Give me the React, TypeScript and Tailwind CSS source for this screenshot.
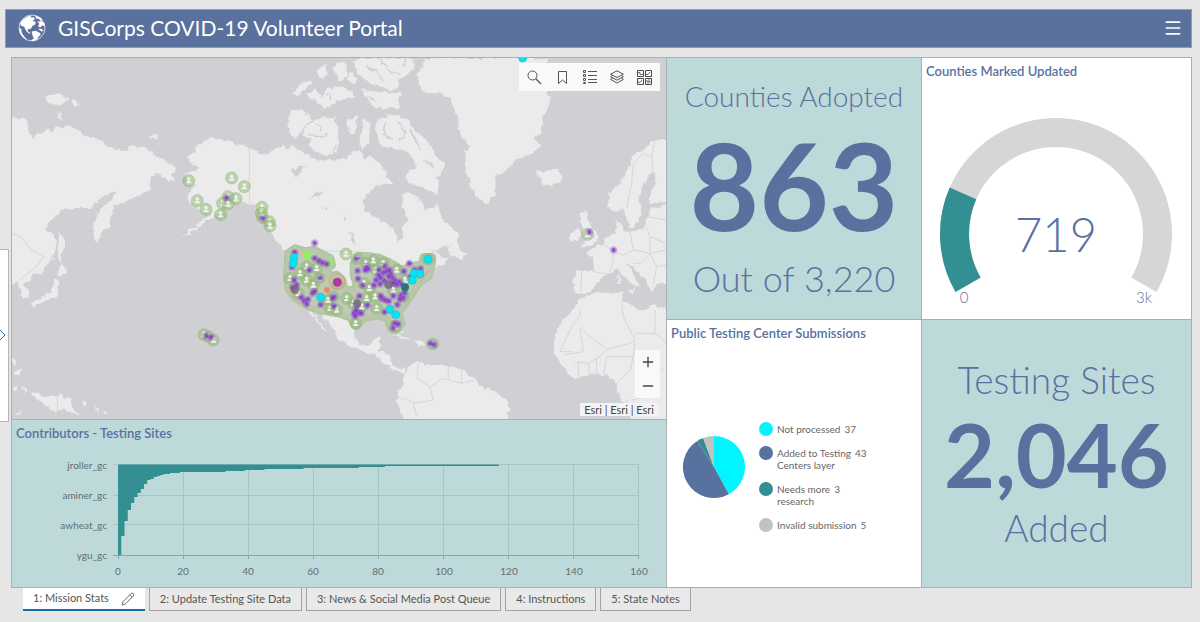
import { useState } from "react";
import { Plus, Minus, Pencil, Menu } from "lucide-react";

const TABS = [
  "1: Mission Stats",
  "2: Update Testing Site Data",
  "3: News & Social Media Post Queue",
  "4: Instructions",
  "5: State Notes",
];

const SUBMISSIONS = [
  { label: ["Not processed"], count: 37, color: "#00f5ff" },
  { label: ["Added to Testing", "Centers layer"], count: 43, color: "#58719f" },
  { label: ["Needs more", "research"], count: 3, color: "#338f92" },
  { label: ["Invalid submission"], count: 5, color: "#c2c2c2" },
];

// [submissions, lower edge of the last bar with that length]
const BAR_STEPS = [
  [117, 466], [82, 467], [74, 468], [57, 469], [45, 470], [39, 471], [33, 472], [19, 473],
  [16, 474], [14, 475], [13, 476], [12, 477], [11, 479], [10, 480], [9, 484], [8, 489],
  [7, 493], [6, 497], [5, 503], [4, 510], [3, 521], [2, 536], [1, 555],
];

const LAND = [
  // eastern asia
  "M30 200L60 206L78 208L85 222L88 245L100 267L108 255L130 247L140 236L158 250L165 230L185 228L210 230L232 238L245 255L270 262L300 268L315 290L345 296L372 302L385 305L392 290L420 290L445 296L470 315L500 335L530 355L528 372L510 372L522 385L505 392L485 378L475 370L460 378L448 402L455 422L435 425L400 445L365 462L345 462L335 490L328 520L308 550L290 578L282 550L280 520L290 490L320 462L345 430L338 425L310 440L290 455L265 474L215 475L185 480L165 500L145 525L132 540L160 548L170 575L168 600L150 635L125 665L100 675L88 690L72 700L85 720L86 745L68 750L62 720L50 700L30 705Z",
  "M178 545L186 552L192 595L184 610L182 640L174 620L175 590Z",
  "M178 645L190 655L202 662L185 680L172 672Z",
  "M168 680L178 700L170 740L140 750L118 762L98 775L92 762L120 745L150 730L160 705Z",
  "M135 145L150 132L185 130L202 150L180 168L155 165Z",
  "M212 152L232 150L242 166L225 168Z",
  "M168 188L188 203L180 208Z",
  "M448 262L458 254L478 256L474 265Z",
  "M95 1028L120 1028L130 1043L160 1036L180 1033L212 1052L218 1072L240 1096L210 1090L190 1078L170 1085L150 1075L130 1060L105 1045Z",
  "M240 1062L262 1055L255 1068Z",
  "M38 925L52 930L48 945L40 945Z",
  "M48 955L66 960L58 976L46 970Z",
  "M40 1015L52 1012L50 1024L42 1026ZM66 1014L82 1018L78 1028ZM42 1090L66 1080L60 1092ZM282 1068L296 1076L290 1080ZM305 1080L318 1092L310 1092Z",
  // north america
  "M560 320L575 312L590 290L615 272L632 260L650 268L690 275L720 285L748 294L780 308L800 312L820 300L838 290L850 280L858 295L885 290L905 305L940 325L975 332L1010 328L1040 325L1060 305L1080 300L1090 330L1115 320L1140 340L1160 370L1150 400L1110 420L1090 450L1095 485L1120 500L1160 520L1185 540L1195 575L1205 560L1205 532L1222 510L1210 470L1208 430L1230 425L1255 440L1275 482L1300 472L1315 460L1320 490L1340 520L1375 555L1370 575L1335 590L1290 604L1310 602L1320 618L1342 625L1335 640L1310 655L1295 650L1280 680L1255 700L1235 730L1225 755L1195 780L1205 810L1206 845L1190 850L1175 820L1160 802L1120 805L1085 810L1068 830L1065 860L1080 885L1100 890L1115 870L1142 860L1140 880L1130 905L1170 912L1175 945L1200 958L1218 955L1212 970L1190 965L1155 945L1130 918L1100 905L1050 890L1030 872L1015 870L1000 835L965 790L948 784L936 782L950 805L980 845L970 840L940 800L920 775L890 750L868 715L855 690L855 640L862 604L840 590L820 560L800 520L780 480L755 462L735 460L705 460L680 470L655 490L630 508L600 526L570 548L540 562L590 524L625 500L640 485L610 490L570 460L565 430L590 405L560 400L555 375L600 355L575 340Z",
  "M1345 590L1370 572L1380 600L1396 615L1385 628L1350 615Z",
  // arctic archipelago
  "M870 180L905 180L935 208L912 236L880 262L862 235Z",
  "M915 235L940 212L985 200L1005 205L1015 250L1010 305L985 318L950 305L925 290L935 268L908 258Z",
  "M910 90L935 98L915 120L900 138L880 130Z",
  "M950 55L975 45L980 75L958 85Z",
  "M920 130L945 118L965 140L985 108L1005 120L1006 160L970 176L950 160Z",
  "M1040 205L1068 200L1072 245L1055 252L1040 230Z",
  "M1090 200L1108 222L1108 280L1085 300L1078 270L1085 240Z",
  "M1000 105L1060 125L1066 140L1020 152L998 140Z",
  "M1010 40L1035 35L1045 80L1020 90L1000 60Z",
  "M1060 36L1090 24L1240 24L1240 60L1195 95L1195 120L1150 118L1110 100L1075 70Z",
  "M1080 120L1145 125L1200 130L1196 174L1130 176L1105 150Z",
  "M1135 205L1190 194L1230 215L1245 240L1285 280L1335 350L1312 385L1315 432L1280 420L1245 405L1210 380L1245 352L1240 322L1205 300L1170 292L1140 285L1125 250Z",
  "M1140 380L1165 385L1180 402L1160 405Z",
  "M1050 60L1072 85L1064 104L1044 92Z",
  // greenland, iceland
  "M1275 24L1268 52L1250 76L1255 105L1280 130L1320 130L1350 150L1370 190L1375 230L1385 262L1408 290L1392 312L1396 350L1410 400L1430 440L1465 465L1480 440L1490 400L1492 380L1530 350L1552 328L1590 315L1625 290L1600 265L1625 245L1630 200L1645 172L1650 150L1640 128L1640 24Z",
  "M1610 362L1630 368L1645 358L1672 356L1687 375L1675 398L1645 408L1625 400L1622 385Z",
  // british isles
  "M1740 492L1765 485L1760 505L1775 530L1792 560L1795 575L1770 585L1745 590L1758 570L1745 552L1755 535L1740 515Z",
  "M1735 535L1742 553L1732 572L1712 575L1714 548Z",
  // europe
  "M2010 265L1965 270L1935 295L1895 320L1885 360L1860 400L1825 430L1825 470L1840 490L1870 475L1880 510L1890 535L1910 520L1925 490L1915 440L1935 400L1950 370L1970 375L1965 400L1945 430L1950 462L2010 455L2010 464L1952 475L1942 500L1935 532L1895 545L1870 545L1862 520L1850 508L1850 545L1830 555L1810 580L1780 595L1755 605L1780 622L1782 665L1725 662L1720 700L1725 730L1760 732L1790 700L1822 672L1852 658L1875 680L1905 712L1918 700L1890 660L1875 640L1900 650L1935 690L1955 728L1970 700L2010 700Z",
  "M1852 680L1860 675L1862 705L1853 705Z",
  "M1880 722L1905 718L1902 732Z",
  // africa
  "M1755 737L1740 745L1710 790L1670 840L1662 880L1664 920L1690 950L1720 985L1770 976L1820 976L1855 1000L1852 1032L1880 1060L1895 1120L2010 1120L2010 775L1950 768L1925 782L1890 760L1862 752L1870 728L1810 728Z",
  // south america, caribbean
  "M1215 975L1225 950L1255 930L1280 945L1340 945L1385 958L1420 985L1435 1010L1490 1025L1525 1055L1530 1080L1515 1120L1215 1120L1205 1090L1190 1060L1195 1020L1215 1000Z",
  "M1172 852L1200 855L1245 875L1215 868Z",
  "M1245 872L1270 875L1278 885L1250 886Z",
];

const BORDERS = [
  "M748 294L748 462L775 485L800 505",
  "M880 603L1070 603L1110 620",
  "M36 552L60 558L95 600L130 620L110 650L60 690",
  "M172 1033L172 1090",
  "M1720 905L1680 905L1715 830L1740 800L1740 780",
  "M1740 835L1820 898L1890 880L1905 870L1870 800L1865 760",
  "M1740 835L1750 905L1690 915",
  "M1905 850L1965 850L1965 780M1965 850L2000 880",
  "M1905 870L1900 920L1820 920L1810 975M1770 976L1765 940L1800 920L1820 898",
  "M1900 920L1890 960L1860 990M1900 940L1990 960M1895 1050L1940 1040L1950 990",
  "M1720 950L1735 935L1765 940M1735 985L1735 935M1790 976L1790 925",
  "M1815 585L1840 605L1838 640L1830 665M1840 605L1870 615L1900 600L1890 545",
  "M1900 600L1950 610L1998 600M1940 532L1950 560L1950 610L1920 640L1900 640",
  "M1950 610L1970 650L1960 700M1970 650L1998 645M1942 500L1998 510M1950 560L1998 580",
  "M1965 270L1955 320L1930 310L1900 340L1895 400L1880 475M1955 320L1960 370",
  "M1780 665L1822 672M1745 665L1742 725",
  "M1255 940L1250 985L1290 1010L1300 1050L1240 1060L1210 1040",
  "M1290 1010L1330 985L1385 1000L1420 990M1345 945L1345 985M1385 958L1385 1000",
  "M1240 1060L1250 1100M1190 1040L1215 1050",
];

const PEOPLE = [
  [566, 392], [695, 384], [733, 410], [592, 452], [618, 478], [662, 494], [684, 440], [708, 446],
  [668, 460], [684, 462], [786, 472], [784, 490], [788, 503], [808, 515], [810, 528], [612, 854],
  [626, 860], [640, 870], [1763, 553], [1298, 882], [1038, 612], [1072, 626], [1284, 628],
  [870, 685], [920, 690], [920, 650], [958, 685], [990, 775], [1010, 780], [1067, 820],
  [1130, 775], [1185, 830], [1040, 745], [1098, 640], [1012, 700], [895, 730], [1092, 700],
  [1250, 670], [1210, 740], [1150, 640], [1100, 745], [1160, 690], [1000, 740], [900, 670],
  [940, 705], [985, 750], [1060, 760], [1108, 715], [1125, 740], [1128, 660], [1180, 720],
  [1190, 660], [1120, 632], [1215, 690], [950, 655], [1085, 770],
];

const PURPLE = [
  [944, 579], [1841, 600], [680, 443], [788, 505], [620, 858], [633, 862], [1292, 880], [1302, 884], [1768, 546],
  [884, 607], [876, 652], [944, 625], [957, 632], [968, 638], [980, 642], [928, 660], [960, 684],
  [882, 690], [890, 704], [878, 712], [904, 742], [912, 752], [924, 748], [920, 762], [938, 730],
  [944, 724], [962, 764], [1002, 740], [1002, 769], [998, 744], [1070, 626], [1073, 662], [1074, 686],
  [1088, 706], [1100, 650], [1104, 658], [1096, 660], [1078, 738], [1102, 766], [1062, 790],
  [1076, 788], [1084, 790], [1068, 780], [1066, 798], [1136, 660], [1154, 648], [1136, 676],
  [1142, 684], [1128, 690], [1122, 706], [1150, 668], [1160, 664], [1172, 672], [1178, 684],
  [1186, 692], [1198, 696], [1190, 704], [1166, 680], [1154, 692], [1168, 660], [1146, 746],
  [1156, 750], [1166, 754], [1142, 738], [1180, 738], [1204, 736], [1210, 744], [1214, 728],
  [1200, 748], [1192, 764], [1154, 786], [1212, 664], [1228, 640], [1262, 656], [1244, 660],
  [1184, 820], [1194, 822], [1180, 834], [1206, 704], [1232, 680], [1180, 700], [1140, 702],
];

const CYAN = [
  [882, 623], [880, 640], [962, 742], [1284, 628], [1242, 670], [1260, 672], [1237, 691],
  [1170, 778], [1187, 794], [1568, 24],
];

const US_CLUSTER =
  "M866 610L885 596L915 605L940 600L990 625L995 645L980 655L985 680L1010 675L1025 690L1034 720L1060 722L1072 705L1062 675L1062 640L1078 618L1110 620L1140 625L1180 645L1208 662L1230 650L1265 645L1272 622L1296 622L1294 645L1285 678L1255 698L1232 735L1206 772L1192 786L1204 818L1192 838L1174 836L1164 806L1140 795L1090 802L1068 828L1052 802L1020 790L960 780L925 768L885 742L866 715L862 680Z";

const polar = (cx: number, cy: number, r: number, deg: number) => {
  const a = ((deg - 90) * Math.PI) / 180;
  return `${(cx + r * Math.cos(a)).toFixed(2)} ${(cy + r * Math.sin(a)).toFixed(2)}`;
};

const ringArc = (cx: number, cy: number, outer: number, inner: number, from: number, to: number) => {
  const large = to - from > 180 ? 1 : 0;
  return `M${polar(cx, cy, outer, from)}A${outer} ${outer} 0 ${large} 1 ${polar(cx, cy, outer, to)}L${polar(cx, cy, inner, to)}A${inner} ${inner} 0 ${large} 0 ${polar(cx, cy, inner, from)}Z`;
};

function GlobeLogo() {
  return (
    <svg viewBox="0 0 78 80" className="h-7 w-7" aria-hidden="true">
      <circle cx="39" cy="40" r="37" fill="none" stroke="#fff" strokeWidth="2" />
      <path
        fill="#fff"
        d="M5 26L14 15L26 7L38 4L34 10L44 9L48 14L40 20L50 22L48 30L40 34L36 42L26 44L28 50L36 55L30 56L22 48L16 36L8 34ZM48 4L62 9L70 17L64 20L58 14L50 12ZM54 22L66 20L74 26L76 36L68 32L64 38L56 36L60 28ZM38 50L50 48L62 54L64 60L58 64L54 72L44 78L36 76L44 70L40 60ZM56 42L66 42L72 48L66 50ZM2 40L8 42L10 54L18 66L26 74L14 68L5 56Z"
      />
    </svg>
  );
}

function SearchIcon() {
  return (
    <svg viewBox="0 0 15 15" className="h-[15px] w-[15px]" fill="none" stroke="#555" aria-hidden="true">
      <circle cx="5.500" cy="5.500" r="4.500" />
      <path d="M8.800 8.800L14 14" strokeWidth="1.300" />
    </svg>
  );
}

function BookmarkIcon() {
  return (
    <svg viewBox="0 0 15 15" className="h-[15px] w-[15px]" fill="none" stroke="#555" aria-hidden="true">
      <path d="M3.500 1.500H11.500V13.500L7.500 10L3.500 13.500Z" />
    </svg>
  );
}

function LegendIcon() {
  return (
    <svg viewBox="0 0 14 14" className="h-3.5 w-3.5" fill="none" stroke="#555" aria-hidden="true">
      <path d="M5 1.5H14M5 5.5H14M5 9.5H14M5 12.500H14" />
      <path d="M.5 .5H2.500V2.500H.5ZM.5 4.500H2.500V6.500H.5ZM.5 8.500H2.500V10.500H.5ZM.5 12.500H2.500V13.500H.5Z" />
    </svg>
  );
}

function LayersIcon() {
  return (
    <svg viewBox="0 0 14 14" className="h-3.5 w-3.5" fill="none" stroke="#555" strokeLinejoin="round" aria-hidden="true">
      <path d="M7 .8L13.400 4.200L7 7.600L.6 4.200Z" />
      <path d="M2.600 5.500L.6 6.700L7 10.200L13.400 6.700L11.400 5.500" />
      <path d="M2.600 8.200L.6 9.400L7 13L13.400 9.400L11.400 8.200" />
    </svg>
  );
}

function BasemapIcon() {
  return (
    <svg viewBox="0 0 15 15" className="h-[15px] w-[15px]" fill="none" stroke="#4a4a4a" aria-hidden="true">
      <path d="M.5 .5H6.500V6.500H.5ZM8.500 .5H14.500V6.500H8.500ZM.5 8.500H6.500V14.500H.5ZM8.500 8.500H14.500V14.500H8.500Z" />
      <path d="M1 2.500H3V4.500H6M9 4.500H11L13 2M1 12L3 12.500L5 10M9 11H11V14M12 9V12H14" strokeWidth=".8" />
    </svg>
  );
}

function VolunteerMap() {
  return (
    <svg
      viewBox="36 24 1962 1083"
      preserveAspectRatio="xMidYMid slice"
      className="absolute inset-0 h-full w-full"
      role="img"
      aria-label="Map of testing sites"
    >
      <defs>
        <filter id="coast" x="0" y="0" width="100%" height="100%">
          <feTurbulence type="fractalNoise" baseFrequency="0.05" numOctaves="2" seed="4" />
          <feDisplacementMap in="SourceGraphic" scale="20" xChannelSelector="R" yChannelSelector="G" />
        </filter>
      </defs>
      <rect x="0" y="0" width="2040" height="1140" fill="#d0cfd4" />
      <g filter="url(#coast)">
        <rect x="0" y="0" width="2040" height="1140" fill="#d0cfd4" />
        <g fill="#ebebeb">
          {LAND.map((d) => (
            <path key={d} d={d} />
          ))}
        </g>
        {/* lakes */}
        <path
          fill="#d0cfd4"
          d="M868 360L900 350L918 352L895 372L888 382L880 368ZM925 445L975 418L955 440ZM968 478L990 470L975 482ZM1045 545L1056 550L1068 580L1060 582ZM1030 490L1036 510L1030 512ZM1110 620L1150 612L1168 632L1140 628ZM1158 640L1168 660L1160 676L1152 660ZM1172 636L1196 650L1188 664Z"
        />
        {/* inlets between the arctic islands */}
        <path
          fill="none"
          stroke="#d0cfd4"
          strokeWidth="5"
          d="M925 250L960 262L985 255M950 225L965 240M1000 320L1005 290M1100 50L1130 62L1150 95M1140 30L1165 60L1200 70M1215 30L1205 55M1100 140L1130 150M1155 210L1150 250L1175 270M1195 215L1215 250L1200 275M1230 240L1250 275L1262 300M1270 330L1300 345M940 145L955 160M980 130L990 150"
        />
      </g>
      <g fill="none" stroke="#d6d6d8" strokeWidth="3">
        {BORDERS.map((d) => (
          <path key={d} d={d} />
        ))}
      </g>

      <path d={US_CLUSTER} fill="#b9c9ab" stroke="#afc79c" strokeWidth="26" strokeLinejoin="round" />
      <path d={US_CLUSTER} fill="#bfcab5" stroke="#bac7ae" strokeWidth="14" strokeLinejoin="round" />
      {PEOPLE.map(([x, y]) => (
        <g key={`${x}-${y}`}>
          <circle cx={x} cy={y} r="18" fill="#8fb573" fillOpacity=".5" stroke="#98bd80" strokeOpacity=".6" strokeWidth="3" />
          <circle cx={x} cy={y - 5} r="5" fill="#eef4ea" />
          <path d={`M${x - 8} ${y + 8}a8 7 0 0 1 16 0z`} fill="#eef4ea" />
        </g>
      ))}
      <g fill="none" stroke="#f0907a" strokeOpacity=".7" strokeWidth="4">
        <circle cx="1012" cy="695" r="24" />
        <path d="M870 705Q870 730 890 748M872 612Q880 590 900 615M1285 660L1262 694" />
      </g>
      <circle cx="921" cy="615" r="12" fill="#8df35a" />
      <circle cx="990" cy="637" r="11" fill="#8df35a" fillOpacity=".7" />
      <circle cx="981" cy="720" r="9" fill="#e09068" />
      {PURPLE.map(([x, y]) => (
        <g key={`${x}-${y}`}>
          <circle cx={x} cy={y} r="11" fill="#9055cc" fillOpacity=".42" />
          <circle cx={x} cy={y} r="6" fill="#8132c8" fillOpacity=".75" />
        </g>
      ))}
      <circle cx="1012" cy="697" r="13" fill="#b5179e" fillOpacity=".85" />
      <g fill="#71637f" fillOpacity=".8">
        <circle cx="885" cy="718" r="13" />
        <circle cx="1071" cy="761" r="13" />
        <circle cx="1166" cy="704" r="13" />
      </g>
      <circle cx="1215" cy="712" r="12" fill="#23767d" />
      {CYAN.map(([x, y]) => (
        <circle key={`${x}-${y}`} cx={x} cy={y} r="12" fill="#00e6f2" stroke="#2cb8cc" strokeWidth="2" />
      ))}
    </svg>
  );
}

function ContributorsChart() {
  const x0 = 118;
  const unit = 3.255;
  let bars = `M${x0} 464.5`;
  let top = 464.5;
  BAR_STEPS.forEach(([value, bottom]) => {
    bars += `L${x0 + value * unit} ${top}L${x0 + value * unit} ${bottom}`;
    top = bottom;
  });
  bars += `L${x0} ${top}Z`;

  return (
    <svg viewBox="12 447 654 140" className="h-0 w-full grow" role="img" aria-label="Testing sites per contributor">
      <g stroke="#a8c5c6">
        {[464.5, 495.5, 524.5].map((y) => (
          <path key={y} d={`M113 ${y}H638.5`} />
        ))}
        {[183.5, 248.5, 313.5, 378.5, 443.5, 508.5, 573.5, 638.5].map((x) => (
          <path key={x} d={`M${x} 464V555`} />
        ))}
      </g>
      <path d={bars} fill="#338f92" />
      <path d="M113 555.5H638.5" stroke="#8aa5a6" />
      <path d="M118.500 555V559M183.500 555V559M248.500 555V559M313.500 555V559M378.500 555V559M443.500 555V559M508.500 555V559M573.500 555V559M638.500 555V559" stroke="#8aa5a6" />
      <g fill="#5f7070" fontSize="10" textAnchor="end">
        <text x="107" y="469">jroller_gc</text>
        <text x="107" y="499">aminer_gc</text>
        <text x="107" y="529">awheat_gc</text>
        <text x="107" y="559">ygu_gc</text>
      </g>
      <g fill="#5f7070" fontSize="10" textAnchor="middle">
        {[0, 20, 40, 60, 80, 100, 120, 140, 160].map((v) => (
          <text key={v} x={Math.round(x0 + v * unit)} y="575">
            {v}
          </text>
        ))}
      </g>
    </svg>
  );
}

function UpdatedGauge() {
  const split = -120 + (719 / 3220) * 240;
  return (
    <svg viewBox="922 85 269 234" className="h-0 w-full grow" role="img" aria-label="719 of 3,220 counties updated">
      <path d={ringArc(1056, 234, 116, 87, -120, 120)} fill="#d6d6d6" />
      <path d={ringArc(1056, 234, 116, 87, -120, split)} fill="#338f92" />
      <g fill="#58719f" textAnchor="middle" className="font-light">
        <text x="1056" y="252" fontSize="47">719</text>
        <text x="964" y="303" fontSize="15">0</text>
        <text x="1144" y="303" fontSize="15">3k</text>
      </g>
    </svg>
  );
}

function SubmissionsPie() {
  const total = SUBMISSIONS.reduce((sum, s) => sum + s.count, 0);
  let angle = 0;
  return (
    <svg viewBox="0 0 64 64" className="h-16 w-16 shrink-0" role="img" aria-label="Submissions by status">
      {SUBMISSIONS.map((s) => {
        const from = angle;
        angle += (s.count / total) * 360;
        return <path key={s.color} d={`M32 32L${polar(32, 32, 31, from)}A31 31 0 0 1 ${polar(32, 32, 31, angle)}Z`} fill={s.color} />;
      })}
    </svg>
  );
}

export default function App() {
  const [activeTab, setActiveTab] = useState(0);

  return (
    <div className="relative flex min-h-screen flex-col bg-[#e6e6e6] pt-[9px] pb-[11px] font-[Lato,sans-serif] text-[#58719f]">
      <header className="mr-2 ml-[5px] flex h-[39px] items-center border border-[#8c9cbc] bg-[#5a709d] pr-2 pb-0.5 pl-3 text-white">
        <GlobeLogo />
        <h1 className="ml-3 text-[21px] leading-7">GISCorps COVID-19 Volunteer Portal</h1>
        <button type="button" aria-label="Menu" className="ml-auto">
          <Menu size={20} strokeWidth={2} />
        </button>
      </header>

      <button
        type="button"
        aria-label="Open side panel"
        className="absolute top-[40%] left-0 flex h-[173px] w-[9px] items-center overflow-hidden border border-l-0 border-[#b5b5b5] bg-white"
      >
        <svg viewBox="0 0 6 12" className="h-3 w-1.5" fill="none" stroke="#2f7fb8" aria-hidden="true">
          <path d="M0 1L5 6L0 11" />
        </svg>
      </button>

      <main className="mt-[9px] mr-2 ml-[11px] grid flex-1 grid-cols-[654fr_254fr_269fr] gap-px border border-[#a9b0b2] bg-[#a9b0b2]">
        <div className="grid grid-rows-[361fr_167fr] gap-px">
          <section className="relative overflow-hidden">
            <VolunteerMap />
            <div className="absolute top-[5px] right-[6px] flex h-7 items-center gap-[13px] bg-[#f9f9f9] px-2 text-[#555]">
              <button type="button" aria-label="Search"><SearchIcon /></button>
              <button type="button" aria-label="Bookmarks"><BookmarkIcon /></button>
              <button type="button" aria-label="Legend"><LegendIcon /></button>
              <button type="button" aria-label="Layers"><LayersIcon /></button>
              <button type="button" aria-label="Basemaps"><BasemapIcon /></button>
            </div>
            <div className="absolute right-[6px] bottom-[21px] flex w-[25px] flex-col items-center bg-[#f9f9f9] text-[#444]">
              <button type="button" aria-label="Zoom in" className="flex h-6 items-center"><Plus size={16} strokeWidth={2} /></button>
              <button type="button" aria-label="Zoom out" className="flex h-6 items-center"><Minus size={16} strokeWidth={2} /></button>
            </div>
            <p className="absolute right-2 bottom-[3px] bg-[#f3f3f3] px-1 text-[11px] leading-[13px] text-[#444]">Esri | Esri | Esri</p>
          </section>

          <section className="flex flex-col bg-[#bed9da]">
            <h2 className="h-[27px] px-1 pt-[3px] text-[13px] leading-5 font-semibold">Contributors - Testing Sites</h2>
            <ContributorsChart />
          </section>
        </div>

        <div className="grid grid-rows-[261fr_267fr] gap-px">
          <section className="flex flex-col items-center justify-center bg-[#bed9da] whitespace-nowrap">
            <p className="text-[28px] leading-[40px] font-light">Counties Adopted</p>
            <p className="text-[120px] leading-[138px] font-bold">863</p>
            <p className="text-[36px] leading-[48px] font-light">Out of 3,220</p>
          </section>
          <section className="flex flex-col bg-white">
            <h2 className="h-[27px] px-1 pt-[3px] text-[13px] leading-5 font-semibold">Public Testing Center Submissions</h2>
            <div className="flex flex-1 items-center gap-[13px] pl-[15px]">
              <SubmissionsPie />
              <ul className="flex flex-col gap-3 pt-5 text-[10px] leading-3 text-[#666]">
                {SUBMISSIONS.map((s) => (
                  <li key={s.color} className="flex items-start gap-1">
                    <svg viewBox="0 0 14 14" className="-my-px h-3.5 w-3.5" aria-hidden="true">
                      <circle cx="7" cy="7" r="7" fill={s.color} />
                    </svg>
                    <span>
                      {s.label.map((line) => (
                        <span key={line} className="block">{line}</span>
                      ))}
                    </span>
                    <span>{s.count}</span>
                  </li>
                ))}
              </ul>
            </div>
          </section>
        </div>

        <div className="grid grid-rows-[261fr_267fr] gap-px">
          <section className="flex flex-col bg-white">
            <h2 className="h-[27px] px-1 pt-[3px] text-[13px] leading-5 font-semibold">Counties Marked Updated</h2>
            <UpdatedGauge />
          </section>
          <section className="flex flex-col items-center justify-center bg-[#bed9da] whitespace-nowrap">
            <p className="text-[37px] leading-[52px] font-light">Testing Sites</p>
            <p className="text-[88px] leading-[96px] font-bold">2,046</p>
            <p className="text-[37px] leading-[52px] font-light">Added</p>
          </section>
        </div>
      </main>

      <nav className="ml-[23px] flex gap-1 text-[11px] text-[#555]">
        {TABS.map((tab, i) => (
          <button
            key={tab}
            type="button"
            onClick={() => setActiveTab(i)}
            className={
              i === activeTab
                ? "flex h-[23px] items-center gap-3 border-b-2 border-[#0f6cb0] bg-white px-[10px]"
                : "flex h-[23px] items-center gap-3 border border-t-0 border-[#a3a3a3] bg-[#e9e9e9] px-[10px]"
            }
          >
            {tab}
            {i === activeTab && <Pencil size={14} strokeWidth={1.5} />}
          </button>
        ))}
      </nav>
    </div>
  );
}
